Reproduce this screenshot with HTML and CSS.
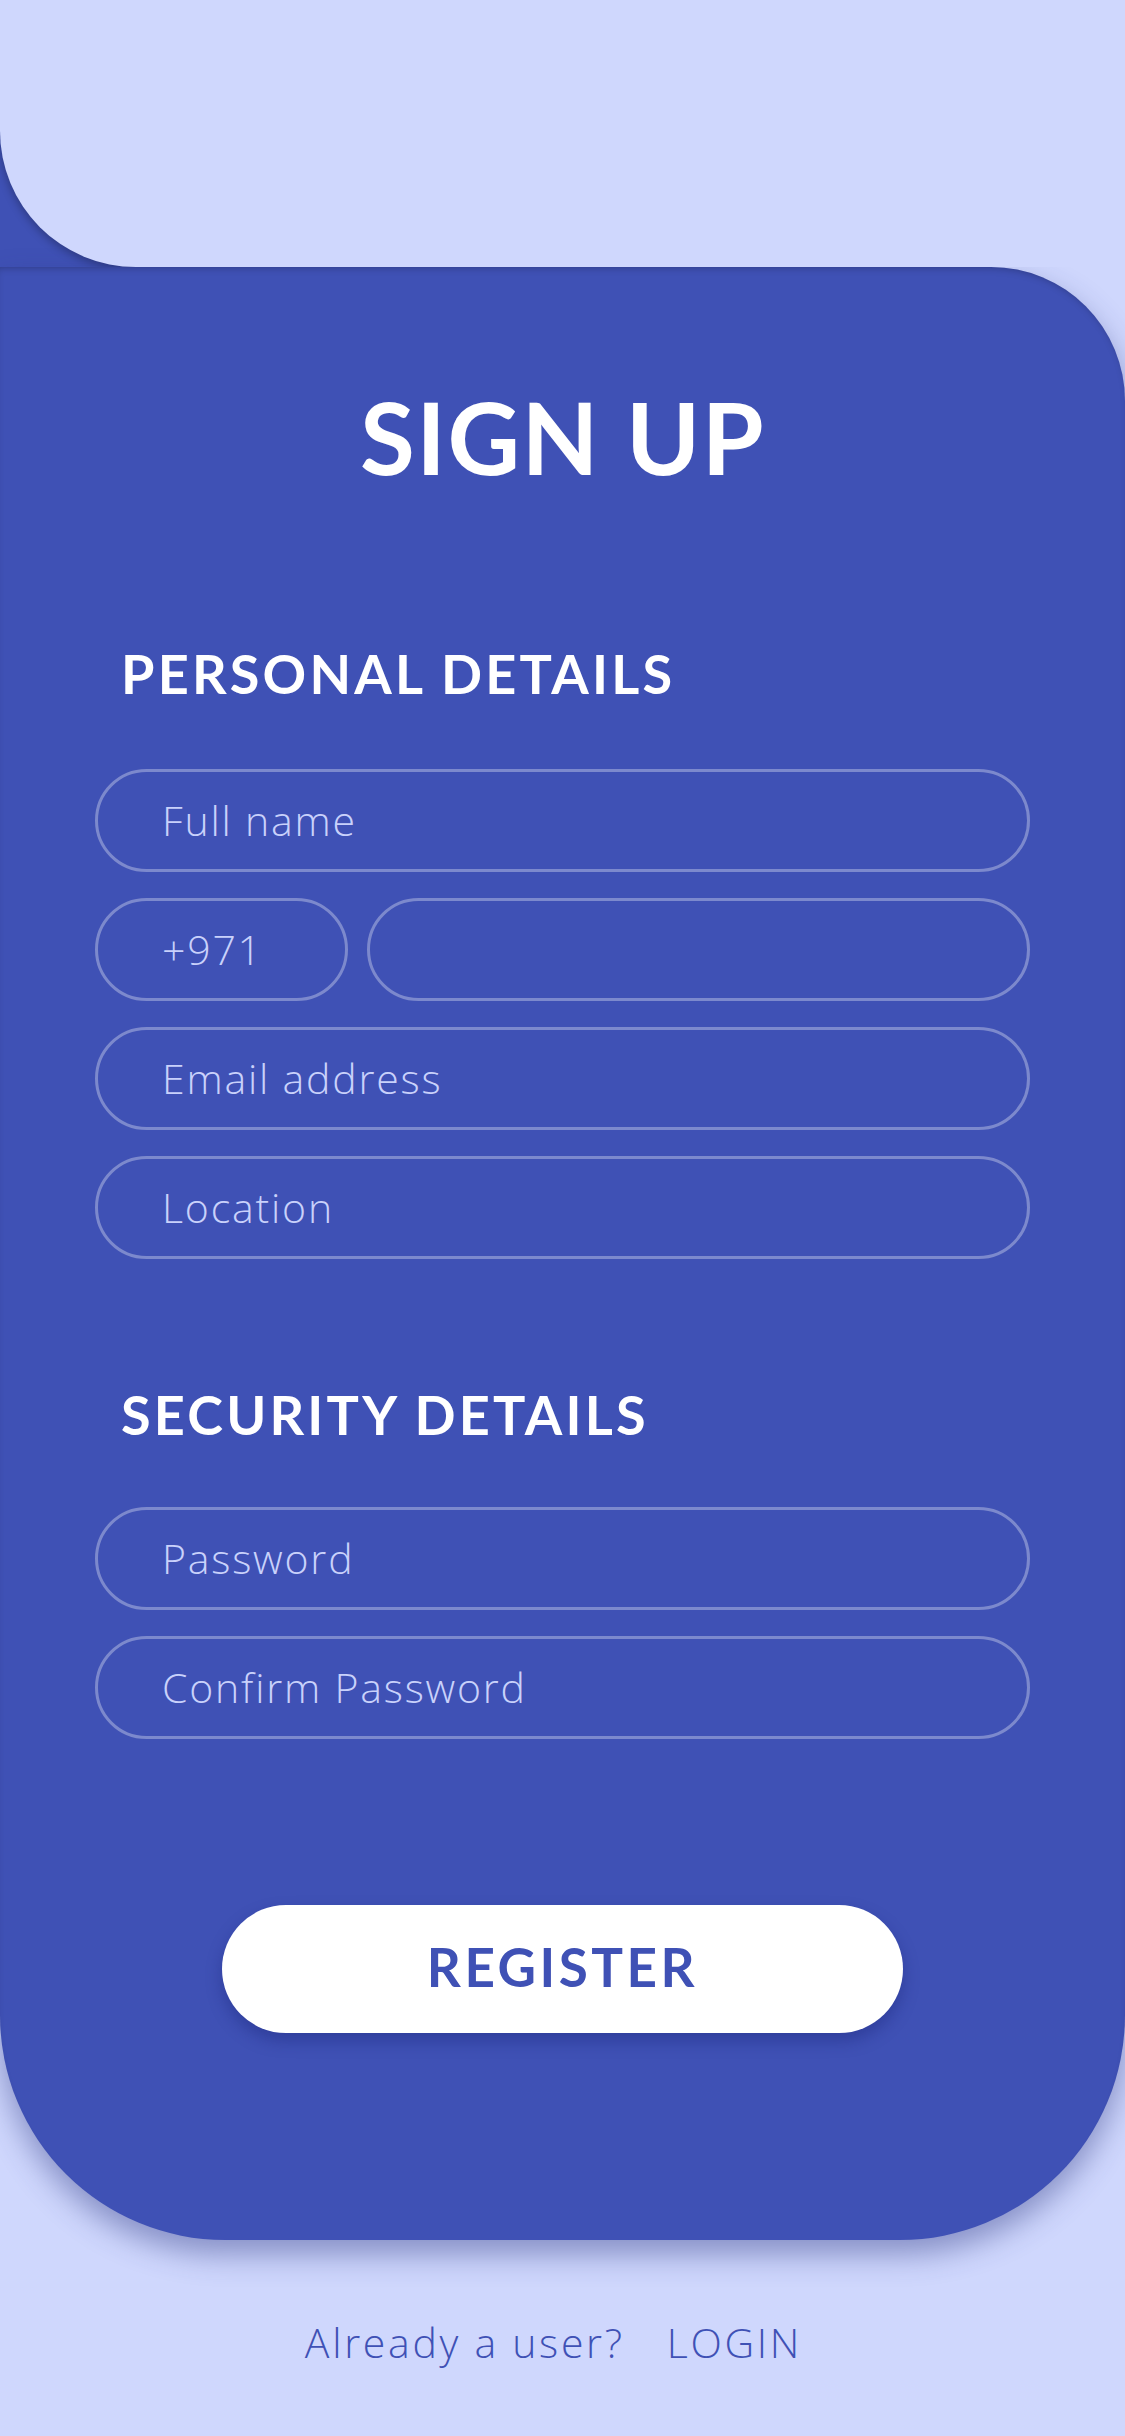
FILE: index.html
```html
<!DOCTYPE html>
<html lang="en">
<head>
<meta charset="utf-8">
<title>Sign up</title>
<link rel="stylesheet" href="styles.css">
</head>
<body>
<div class="page">
  <div class="top">
    <div class="tab"></div>
  </div>
  <main class="card">
    <h1 class="title">SIGN UP</h1>

    <h2 class="section-title section-personal">PERSONAL DETAILS</h2>
    <div class="fields">
      <input class="field" type="text" placeholder="Full name">
      <div class="phone-row">
        <input class="field code" type="text" placeholder="+971">
        <input class="field" type="tel">
      </div>
      <input class="field" type="email" placeholder="Email address">
      <input class="field" type="text" placeholder="Location">
    </div>

    <h2 class="section-title section-security">SECURITY DETAILS</h2>
    <div class="fields fields-security">
      <input class="field" type="password" placeholder="Password">
      <input class="field" type="password" placeholder="Confirm Password">
    </div>

    <button class="register" type="button">REGISTER</button>
  </main>
  <footer class="footer">
    <span class="already">Already a user?</span>
    <a class="login" href="#">LOGIN</a>
  </footer>
</div>
</body>
</html>
```

FILE: styles.css
```css
* {
  box-sizing: border-box;
}

html, body {
  margin: 0;
  padding: 0;
}

body {
  background: #cfd7fd;
  font-family: "Lato", "Open Sans", sans-serif;
  width: 1125px;
  min-height: 2436px;
}

.page {
  display: flex;
  flex-direction: column;
}

.top {
  height: 267px;
  background: linear-gradient(90deg, #3f51b5 0 300px, transparent 300px);
}

.tab {
  height: 100%;
  background: #cfd7fd;
  border-bottom-left-radius: 136px;
  box-shadow: 0 3px 10px rgba(0, 0, 0, 0.3);
  clip-path: inset(0 0 0 0);
}

.card {
  background: #3f51b5;
  height: 1973px;
  border-radius: 0 134px 225px 225px;
  box-shadow: inset 0 5px 8px -5px rgba(0, 0, 0, 0.3),
              0 14px 30px rgba(45, 55, 130, 0.45);
  padding: 119px 95px 0;
  display: flex;
  flex-direction: column;
}

.title {
  margin: 0;
  font-size: 100px;
  line-height: 100px;
  font-weight: 700;
  color: #ffffff;
  text-align: center;
  letter-spacing: 1.5px;
}

.section-title {
  margin: 0;
  padding-left: 26px;
  font-size: 54px;
  line-height: 54px;
  font-weight: 700;
  color: #ffffff;
  letter-spacing: 3.2px;
}

.section-personal {
  margin-top: 161px;
}

.section-security {
  margin-top: 129px;
}

.fields {
  display: flex;
  flex-direction: column;
  gap: 26px;
  margin-top: 68px;
}

.fields-security {
  margin-top: 65px;
}

.phone-row {
  display: flex;
  gap: 19px;
}

.field {
  display: block;
  width: 100%;
  height: 103px;
  border: 3px solid rgba(255, 255, 255, 0.32);
  border-radius: 52px;
  background: transparent;
  padding: 0 0 2px 64px;
  font-family: "Open Sans", "Lato", sans-serif;
  font-weight: 300;
  font-size: 41px;
  letter-spacing: 1.8px;
  color: #ffffff;
  outline: none;
}

.field::placeholder {
  color: #c9d1fb;
  opacity: 1;
}

.phone-row .field {
  flex: 1;
  min-width: 0;
}

.phone-row .field.code {
  flex: 0 0 253px;
  padding-left: 64px;
}

.register {
  align-self: center;
  margin-top: 166px;
  width: 681px;
  height: 128px;
  border: none;
  border-radius: 64px;
  background: #ffffff;
  color: #3f51b5;
  font-family: "Lato", "Open Sans", sans-serif;
  font-size: 53px;
  font-weight: 700;
  letter-spacing: 3.5px;
  box-shadow: 0 8px 16px rgba(20, 30, 110, 0.35);
  display: flex;
  align-items: center;
  justify-content: center;
  padding: 0 0 6px 0;
  cursor: pointer;
}

.footer {
  margin-top: 81px;
  display: flex;
  justify-content: center;
  gap: 42px;
  font-family: "Open Sans", "Lato", sans-serif;
  font-size: 41px;
  line-height: 42px;
  font-weight: 300;
  letter-spacing: 2.7px;
  color: #3f51b5;
  padding-right: 18px;
}

.login {
  color: #3f51b5;
  text-decoration: none;
}
```
